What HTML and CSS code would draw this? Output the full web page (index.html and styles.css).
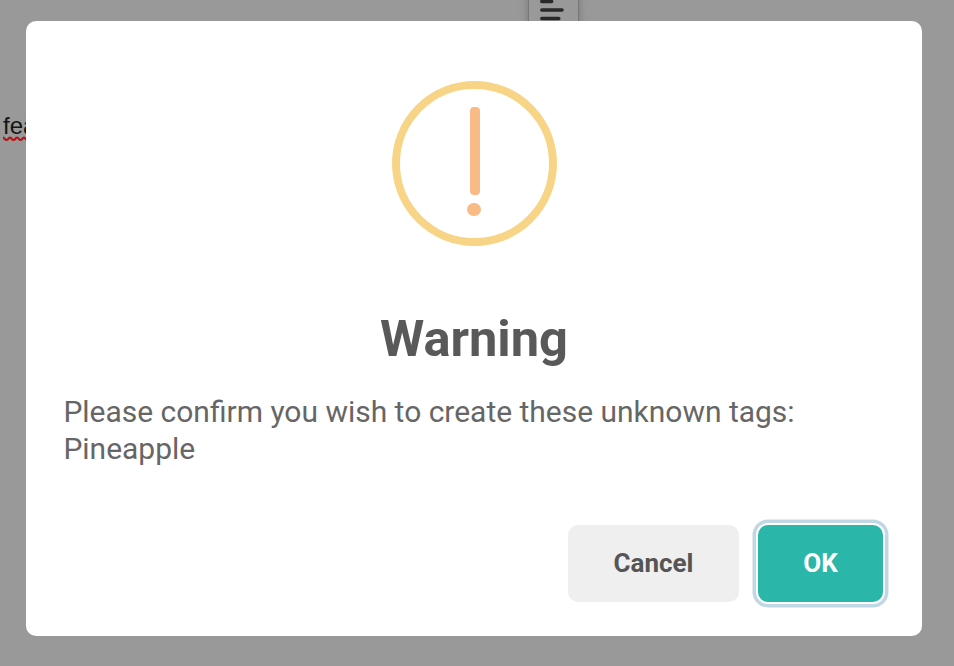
FILE: index.html
```
<!DOCTYPE html>
<html lang="en">
<head>
<meta charset="utf-8">
<title>Warning</title>
<link rel="stylesheet" href="styles.css">
</head>
<body>
<span class="page-text">fea<svg class="squiggle" width="30" height="6" viewBox="0 0 30 6" fill="none"><path d="M0 1.6C1.8 1.6 1.7 4 3.5 4S5.2 1.6 7 1.6 8.7 4 10.5 4s1.7-2.4 3.5-2.4S15.7 4 17.5 4s1.7-2.4 3.5-2.4S22.7 4 24.5 4" stroke="#b51414" stroke-width="2.2"/></svg></span>
<div class="toolbar-button"><svg width="26" height="21" viewBox="0 0 26 21"><path d="M1.8 1.5h9.8M1.8 10h20.2M1.8 18.5h17" stroke="#292929" stroke-width="3.5" stroke-linecap="round"/></svg></div>
<main class="modal" role="dialog" aria-labelledby="title">
  <svg class="warning-icon" width="165" height="165" viewBox="0 0 165 165" fill="none">
    <circle cx="82.5" cy="82.5" r="78.5" stroke="#f8d486" stroke-width="8"/>
    <rect x="78" y="26" width="10" height="88" rx="4" fill="#f8bb86"/>
    <rect x="75" y="122" width="14" height="13" rx="6.5" fill="#f8bb86"/>
  </svg>
  <h1 id="title" class="title">Warning</h1>
  <p class="message">Please confirm you wish to create these unknown tags:<br>Pineapple</p>
  <div class="actions">
    <button class="button cancel">Cancel</button>
    <button class="button confirm">OK</button>
  </div>
</main>
</body>
</html>
```
FILE: styles.css
```
* { box-sizing: border-box; }
body {
  margin: 0;
  width: 954px;
  height: 666px;
  padding: 21px 32px 30px 26px;
  background: #999;
  overflow: hidden;
  position: relative;
  font-family: Roboto, sans-serif;
}
.page-text {
  position: absolute;
  left: 3px;
  top: 112px;
  font: 24px/28px "Liberation Sans", sans-serif;
  color: #151515;
}
.squiggle {
  position: absolute;
  left: 0;
  top: 24px;
}
.toolbar-button {
  position: absolute;
  left: 528px;
  top: -4px;
  width: 51px;
  height: 40px;
  padding: 3px 11px;
  background: #999;
  border: 1px solid #777;
  box-shadow: 0 0 8px #777;
}
.toolbar-button svg { display: block; }
.modal {
  position: relative;
  display: flex;
  flex-direction: column;
  width: 896px;
  height: 615px;
  padding: 60px 38px 34px;
  background: #fff;
  border-radius: 10px;
}
.warning-icon {
  flex: none;
  margin-left: 328px;
}
.title {
  margin: 63px 0 0;
  font-size: 50.6px;
  line-height: 60px;
  font-weight: 700;
  text-align: center;
  color: #595959;
}
.message {
  margin: 24px 0 0 -0.6px;
  font-size: 29.97px;
  line-height: 37px;
  color: #666;
  white-space: nowrap;
}
.actions {
  display: flex;
  justify-content: flex-end;
  gap: 19px;
  margin-top: auto;
  padding-right: 1px;
}
.button {
  height: 77px;
  padding: 0 0 2px;
  border: 0;
  border-radius: 10px;
  font: 700 26px/32px Roboto, sans-serif;
}
.cancel { width: 171px; background: #efefef; color: #555; }
.confirm {
  width: 125px;
  background: #2ab7a9;
  color: #fff;
  box-shadow: 0 0 0 2px #fff, 0 0 0 5.5px #c1d7e6;
}
```
